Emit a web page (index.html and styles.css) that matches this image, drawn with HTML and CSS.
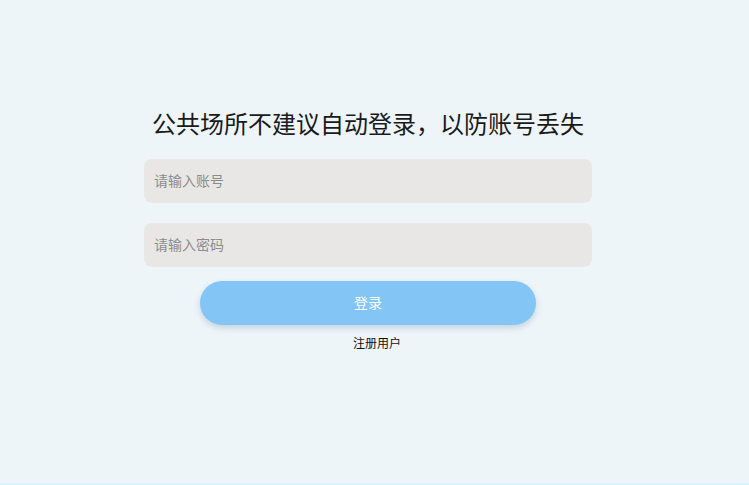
FILE: index.html
```html
<!DOCTYPE html>
<html lang="zh">
<head>
<meta charset="utf-8">
<title>登录</title>
<link rel="stylesheet" href="styles.css">
</head>
<body>
<div class="page">
  <div class="login">
    <h1 class="title">公共场所不建议自动登录，以防账号丢失</h1>
    <input class="field" type="text" placeholder="请输入账号">
    <input class="field field-pwd" type="password" placeholder="请输入密码">
    <button class="btn" type="button">登录</button>
    <a class="reg" href="#">注册用户</a>
  </div>
  <div class="bottom-line"></div>
</div>
</body>
</html>
```
FILE: styles.css
```css
html, body {
  margin: 0;
  padding: 0;
  height: 100%;
}
body {
  background: #eef5f9;
  font-family: "Noto Sans CJK SC", "Noto Sans", sans-serif;
  overflow: hidden;
}
.page {
  height: 485px;
  display: flex;
  flex-direction: column;
  justify-content: space-between;
}
.login {
  display: flex;
  flex-direction: column;
  align-items: center;
  padding-top: 106px;
  width: 448px;
  margin: 0 0 0 144px;
}
.title {
  margin: 0;
  font-size: 24px;
  line-height: 34px;
  font-weight: 400;
  color: #1a1a1a;
  white-space: nowrap;
}
.field {
  box-sizing: border-box;
  width: 448px;
  height: 44px;
  margin-top: 19px;
  border: none;
  outline: none;
  border-radius: 8px;
  background: #e8e7e6;
  padding: 0 10px 2px;
  font-family: inherit;
  font-size: 14px;
  color: #333;
}
.field-pwd {
  margin-top: 20px;
}
.field::placeholder {
  color: #8c8c8c;
}
.btn {
  width: 336px;
  height: 44px;
  margin-top: 14px;
  padding: 0 0 2px;
  border: none;
  border-radius: 22px;
  background: #83c5f5;
  color: #fff;
  font-family: inherit;
  font-size: 14px;
  box-shadow: 0 3px 6px rgba(120, 150, 180, 0.35);
  cursor: pointer;
}
.reg {
  margin-top: 9px;
  margin-left: 18px;
  font-size: 12px;
  line-height: 17px;
  color: #111;
  text-decoration: none;
}
.bottom-line {
  height: 2px;
  background: #d6f4fc;
}
```
